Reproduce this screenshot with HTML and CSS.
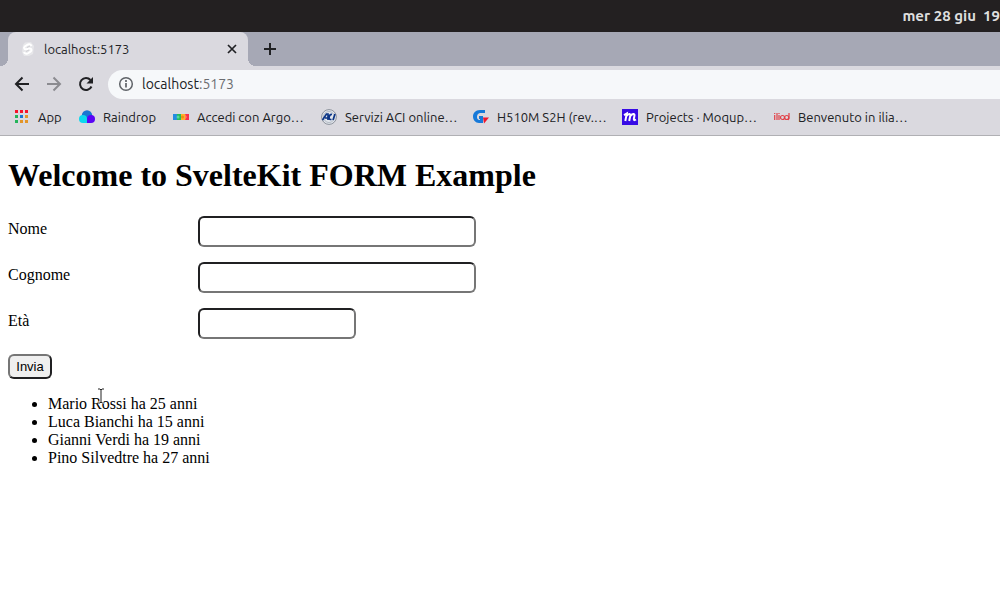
FILE: index.html
```html
<!DOCTYPE html>
<html lang="it">
<head>
<meta charset="utf-8">
<title>localhost:5173</title>
<link rel="stylesheet" href="styles.css">
</head>
<body>
<header class="browser">
  <div class="system-bar"><time>mer 28 giu&nbsp; 19</time></div>
  <div class="tab-strip">
    <div class="tab">
      <svg class="icon" viewBox="0 0 16 16"><path d="M5 1.500 11 1l3 4-1 8-4 2H4l-2-4 1-7z" fill="#e7e7ea"/><path d="M11.500 5C10.500 2.800 8.500 3 7 4L5 5.300C3 6.800 4.500 8.600 6.500 8.200L9 7.600C12 7.200 12 9.500 10.500 10.700L8.500 12C6.500 13.200 4.500 12.800 4 11" fill="none" stroke="#fff" stroke-width="2"/><path d="M7 6.500 10 5M6 10.500l3-1.500" stroke="#d0d0d4"/></svg>
      <span class="tab-title">localhost:5173</span>
      <button class="icon-button" aria-label="Chiudi scheda"><svg class="icon" viewBox="0 0 16 16"><path d="m4 4 8 8m0-8-8 8" stroke="#202124" stroke-width="1.700"/></svg></button>
    </div>
    <button class="icon-button" aria-label="Nuova scheda"><svg class="icon" viewBox="0 0 16 16"><path d="M8 2v12M2 8h12" stroke="#202124" stroke-width="2"/></svg></button>
  </div>
  <nav class="toolbar" aria-label="Navigazione">
    <button class="icon-button" aria-label="Indietro"><svg class="icon" viewBox="0 0 16 16"><path d="M15 8H2m6.500-6.500L2 8l6.500 6.500" fill="none" stroke="#202124" stroke-width="2"/></svg></button>
    <button class="icon-button" aria-label="Avanti"><svg class="icon" viewBox="0 0 16 16"><path d="M1 8h13M7.500 1.500 14 8l-6.500 6.500" fill="none" stroke="#8b8b90" stroke-width="2"/></svg></button>
    <button class="icon-button" aria-label="Ricarica"><svg class="icon" viewBox="0 0 16 16"><path d="M13.500 10.500A6 6 0 1 1 12.500 4" fill="none" stroke="#202124" stroke-width="2"/><path d="M15 1v6.500H8.500z" fill="#202124"/></svg></button>
    <div class="address">
      <svg class="icon" viewBox="0 0 16 16"><circle cx="8" cy="8" r="6.300" fill="none" stroke="#5f6368" stroke-width="1.500"/><path d="M8 7v4.500M8 4v2" stroke="#5f6368" stroke-width="1.700"/></svg>
      <span>localhost<span class="port">:5173</span></span>
    </div>
  </nav>
  <nav class="bookmarks" aria-label="Preferiti">
    <a class="bookmark" href="#"><svg class="icon" viewBox="0 0 16 16"><path d="M1 1h3v3H1zM6 1h3v3H6zM11 1h3v3h-3z" fill="#f5132b"/><path d="M1 6h3v3H1zM1 11h3v3H1z" fill="#24b45a"/><path d="M6 6h3v3H6z" fill="#1976d2"/><path d="M11 6h3v3h-3zM6 11h3v3H6zM11 11h3v3h-3z" fill="#e39528"/></svg>App</a>
    <a class="bookmark" href="#"><svg class="icon" viewBox="0 0 16 16"><circle cx="8" cy="6.500" r="5.200" fill="#1976d2"/><path d="M8 14H4a4 4 0 1 1 4-4z" fill="#0cd8ee"/><path d="M8 14h4a4 4 0 1 0-4-4z" fill="#5a05f5"/></svg>Raindrop</a>
    <a class="bookmark" href="#"><svg class="icon" viewBox="0 0 16 16"><path d="M0 5h4v6H0z" fill="#258de0"/><path d="M4 5h4v6H4z" fill="#26bd59"/><path d="M8 5h4v6H8z" fill="#ffb029"/><path d="M12 5h4v6h-4z" fill="#f9304c"/><circle cx="5" cy="8" r="1.500" fill="#55d8a1"/><circle cx="9.500" cy="8" r="1.500" fill="#e88b19"/><path d="m12 5 2 3-2 3z" fill="#ff805c"/></svg>Accedi con Argo…</a>
    <a class="bookmark" href="#"><svg class="icon" viewBox="0 0 16 16"><circle cx="8" cy="8" r="7.400" fill="#e3e7ed" stroke="#8b919b"/><circle cx="8" cy="8" r="5.500" fill="none" stroke="#b3bac4"/><path d="m1.500 11 4-6h1.500v6M4 9h3M11 5.500C8 5 7 10.500 9.500 10.500h1M14 5l-2 6" fill="none" stroke="#0b3485" stroke-width="1.700"/></svg>Servizi ACI online…</a>
    <a class="bookmark" href="#"><svg class="icon" viewBox="0 0 16 16"><path d="M12 1H7C2.500 1 0 4 0 7.500 0 11 2.500 14 6 14h4V7H6v3h1v1C3 11.500 3 4.500 7 4h5z" fill="#1679d9"/><path d="M10 8.500h6l-5 6z" fill="#f3162d"/></svg>H510M S2H (rev.…</a>
    <a class="bookmark" href="#"><svg class="icon" viewBox="0 0 16 16"><path d="M0 0h16v16H0z" fill="#370be5"/><path d="M2 6.200 4.800 4.500 3.300 12M4.500 7C7 3.500 8.800 5 8.200 7l-1 5M8.500 7C11 3.500 13 5 12.300 7.500L11.800 10q0 2 2.200.5" fill="none" stroke="#fff" stroke-width="2"/></svg>Projects · Moqup…</a>
    <a class="bookmark" href="#"><svg class="icon" viewBox="0 0 16 16"><path d="M.7 6v5M.7 4v1M3 4v7M5 6v5M5 4v1M15 4v5.500l-1 1.500" fill="none" stroke="#e24047" stroke-width="1.200"/><circle cx="8.500" cy="8.500" r="2" fill="none" stroke="#e24047" stroke-width="1.200"/><circle cx="12.700" cy="8.500" r="2" fill="none" stroke="#e24047" stroke-width="1.200"/></svg>Benvenuto in ilia…</a>
  </nav>
</header>
<main class="page">
  <h1 class="title">Welcome to SvelteKit FORM Example</h1>
  <form class="form">
    <div class="field"><label for="nome">Nome</label><input class="text-box" id="nome" type="text"></div>
    <div class="field"><label for="cognome">Cognome</label><input class="text-box" id="cognome" type="text"></div>
    <div class="field"><label for="eta">Età</label><input class="text-box short" id="eta" type="text"></div>
    <button class="submit" type="button">Invia</button>
  </form>
  <ul class="people">
    <li>Mario Rossi ha 25 anni</li>
    <li>Luca Bianchi ha 15 anni</li>
    <li>Gianni Verdi ha 19 anni</li>
    <li>Pino Silvedtre ha 27 anni</li>
  </ul>
</main>
<svg class="cursor" viewBox="0 0 8 16" aria-hidden="true"><path d="M1 1h2l1 1 1-1h2M4 2v12M1 15h2l1-1 1 1h2" fill="none" stroke="#fff" stroke-width="3"/><path d="M1 1h2l1 1 1-1h2M4 2v12M1 15h2l1-1 1 1h2" fill="none" stroke="#222"/></svg>
</body>
</html>
```
FILE: styles.css
```css
* { box-sizing: border-box; }
body {
  margin: 0;
  background: #fff;
  color: #000;
  font: 16px/18px "Liberation Serif", serif;
}
.browser {
  background: #dad9df;
  color: #202124;
  font: 13px/18px Ubuntu, "Noto Sans", sans-serif;
  border-bottom: 1px solid #b0b0b4;
  overflow: hidden;
}
.system-bar {
  display: flex;
  justify-content: flex-end;
  align-items: center;
  height: 32px;
  background: #232021;
  color: #dedede;
  font-size: 15px;
  font-weight: 700;
  white-space: nowrap;
}
.tab-strip {
  display: flex;
  align-items: center;
  gap: 14px;
  height: 34px;
  padding-left: 8px;
  background: #a6a8b5;
}
.tab {
  position: relative;
  display: flex;
  align-items: center;
  gap: 8px;
  width: 240px;
  height: 34px;
  padding: 0 8px 0 12px;
  border-radius: 8px 8px 0 0;
  background: #dad9df;
}
.tab::before, .tab::after {
  content: "";
  position: absolute;
  bottom: 0;
  width: 8px;
  height: 8px;
}
.tab::before {
  right: 100%;
  background: radial-gradient(circle at 0 0, transparent 8px, #dad9df 8px);
}
.tab::after {
  left: 100%;
  background: radial-gradient(circle at 100% 0, transparent 8px, #dad9df 8px);
}
.tab-title { flex: 1; }
.icon {
  display: block;
  flex: none;
  width: 16px;
  height: 16px;
}
.icon-button {
  flex: none;
  padding: 0;
  border: 0;
  background: none;
}
.toolbar {
  display: flex;
  align-items: center;
  gap: 16px;
  height: 36px;
  padding-left: 14px;
}
.address {
  display: flex;
  flex: 1;
  align-items: center;
  gap: 8px;
  height: 29px;
  margin-left: -2px;
  padding-left: 10px;
  border-radius: 15px 0 0 15px;
  background: #f6f8fa;
  font-size: 14px;
}
.port { color: #6b6d71; }
.bookmarks {
  display: grid;
  grid-template-columns: 65px 94px 148px 152px 149px 152px auto;
  align-items: center;
  height: 33px;
  padding: 0 14px;
}
.bookmark {
  display: flex;
  align-items: center;
  gap: 8px;
  margin-bottom: 3px;
  color: inherit;
  text-decoration: none;
  white-space: nowrap;
}
.page { padding: 21px 8px; }
.title {
  margin: 0 0 22px;
  font-size: 32px;
  line-height: 37px;
}
.field {
  display: grid;
  grid-template-columns: 190px auto;
  justify-content: start;
  margin-bottom: 15px;
}
.field label { padding-top: 4px; }
.text-box {
  width: 278px;
  height: 31px;
  border: 2px solid;
  border-color: #202022 #767676 #767676 #202022;
  border-radius: 6px;
  background: #fff;
}
.short { width: 158px; }
.submit {
  display: block;
  min-width: 44px;
  height: 25px;
  padding: 0 6px;
  border: 2px solid;
  border-color: #767676 #202022 #202022 #767676;
  border-radius: 6px;
  background: #efefef;
  color: #000;
  font: 13px/18px "Liberation Sans", sans-serif;
}
.people {
  margin: 16px 0;
  padding-left: 40px;
}
.cursor {
  position: absolute;
  top: 388px;
  left: 97px;
  width: 8px;
  height: 16px;
}
```
